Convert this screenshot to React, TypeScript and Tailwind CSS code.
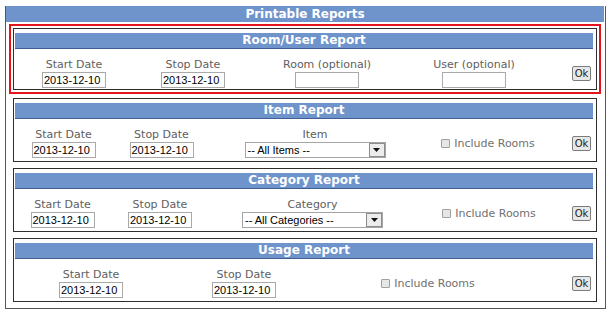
import React from "react";

const VF = "font-['DejaVu_Sans',Verdana,sans-serif]";

function Label({ children }: { children: React.ReactNode }) {
  return (
    <div className={`${VF} text-[11px] leading-[13px] text-[#606060] whitespace-nowrap`}>
      {children}
    </div>
  );
}

function TextBox({ value }: { value?: string }) {
  return (
    <div className="mt-[1px] h-[16px] w-[64px] border border-[#a9a9a9] bg-white pl-[1px] font-['Liberation_Sans',Arial,sans-serif] text-[11px] leading-[14px] text-black whitespace-nowrap overflow-hidden">
      {value ?? ""}
    </div>
  );
}

function SelectBox({ value }: { value: string }) {
  return (
    <div className="mt-[1px] flex h-[16px] w-[141px] border border-[#a5a5a5] bg-white">
      <div className="flex-1 pl-[2px] font-['Liberation_Sans',Arial,sans-serif] text-[11px] leading-[14px] text-black whitespace-nowrap overflow-hidden">
        {value}
      </div>
      <div className="flex h-[14px] w-[16px] items-center justify-center border border-[#8c8c8c] bg-[#ececec]">
        <svg width="7" height="4" viewBox="0 0 7 4">
          <polygon points="0,0 7,0 3.5,4" fill="#111" />
        </svg>
      </div>
    </div>
  );
}

function Field({ label, children }: { label: string; children: React.ReactNode }) {
  return (
    <div className="flex flex-col items-center">
      <Label>{label}</Label>
      {children}
    </div>
  );
}

function OkButton() {
  return (
    <div className="flex h-[15px] w-[19px] items-center justify-center rounded-[2px] border border-[#7c7c7c] bg-[#e8e8e8] font-['DejaVu_Sans',sans-serif] text-[10px] leading-[13px] text-[#222]">
      Ok
    </div>
  );
}

function IncludeRooms() {
  return (
    <div className="flex items-center">
      <span className="mr-[4px] inline-block h-[9px] w-[9px] rounded-[1px] border border-[#a0a0a0] bg-[#e6e6e6]" />
      <span className={`${VF} text-[11px] leading-[13px] text-[#707070] whitespace-nowrap`}>Include Rooms</span>
    </div>
  );
}

function Panel({
  title,
  heightClass,
  gridClass,
  children,
}: {
  title: string;
  heightClass: string;
  gridClass: string;
  children: React.ReactNode;
}) {
  return (
    <div className={`flex w-[584px] flex-col border border-[#2e2e2e] bg-white ${heightClass}`}>
      <div className="pt-[4px] pl-[1px] pr-[3px]">
        <div className="h-[16px] border-b border-[#3f5f92] bg-[#6f94cb] text-center font-['DejaVu_Sans',Verdana,sans-serif] text-[12px] font-bold leading-[15px] text-white">
          {title}
        </div>
      </div>
      <div className={`grid items-center pt-[9px] ${gridClass}`}>{children}</div>
    </div>
  );
}

function OkCell() {
  return (
    <div className="flex justify-end pr-[5px]">
      <OkButton />
    </div>
  );
}

export default function App() {
  return (
    <div className="h-[314px] w-[608px] overflow-hidden bg-white">
      <div className="ml-[5px] mt-[6px] flex h-[303px] w-[601px] flex-col border-b border-l border-r border-[#555]">
        <div className="mr-[1px] h-[16px] bg-[#6f94cb] text-center font-['DejaVu_Sans',Verdana,sans-serif] text-[12px] font-bold leading-[16px] text-white">
          Printable Reports
        </div>

        <div className="ml-[3px] mt-[2px] h-[70px] w-[592px] border-2 border-[#e3141b] p-[2px]">
          <Panel title="Room/User Report" heightClass="h-[62px]" gridClass="grid-cols-[120px_118px_150px_144px_1fr]">
            <Field label="Start Date">
              <TextBox value="2013-12-10" />
            </Field>
            <Field label="Stop Date">
              <TextBox value="2013-12-10" />
            </Field>
            <Field label="Room (optional)">
              <TextBox />
            </Field>
            <Field label="User (optional)">
              <TextBox />
            </Field>
            <OkCell />
          </Panel>
        </div>

        <div className="ml-[7px] mt-[4px]">
          <Panel title="Item Report" heightClass="h-[64px]" gridClass="grid-cols-[99px_97px_210px_136px_1fr]">
            <Field label="Start Date">
              <TextBox value="2013-12-10" />
            </Field>
            <Field label="Stop Date">
              <TextBox value="2013-12-10" />
            </Field>
            <Field label="Item">
              <SelectBox value="-- All Items --" />
            </Field>
            <div className="flex justify-center">
              <IncludeRooms />
            </div>
            <OkCell />
          </Panel>
        </div>

        <div className="ml-[7px] mt-[6px]">
          <Panel title="Category Report" heightClass="h-[64px]" gridClass="grid-cols-[97px_98px_207px_146px_1fr]">
            <Field label="Start Date">
              <TextBox value="2013-12-10" />
            </Field>
            <Field label="Stop Date">
              <TextBox value="2013-12-10" />
            </Field>
            <Field label="Category">
              <SelectBox value="-- All Categories --" />
            </Field>
            <div className="flex justify-center">
              <IncludeRooms />
            </div>
            <OkCell />
          </Panel>
        </div>

        <div className="ml-[7px] mt-[6px]">
          <Panel title="Usage Report" heightClass="h-[64px]" gridClass="grid-cols-[154px_152px_216px_1fr]">
            <Field label="Start Date">
              <TextBox value="2013-12-10" />
            </Field>
            <Field label="Stop Date">
              <TextBox value="2013-12-10" />
            </Field>
            <div className="flex justify-center">
              <IncludeRooms />
            </div>
            <OkCell />
          </Panel>
        </div>
      </div>
    </div>
  );
}
